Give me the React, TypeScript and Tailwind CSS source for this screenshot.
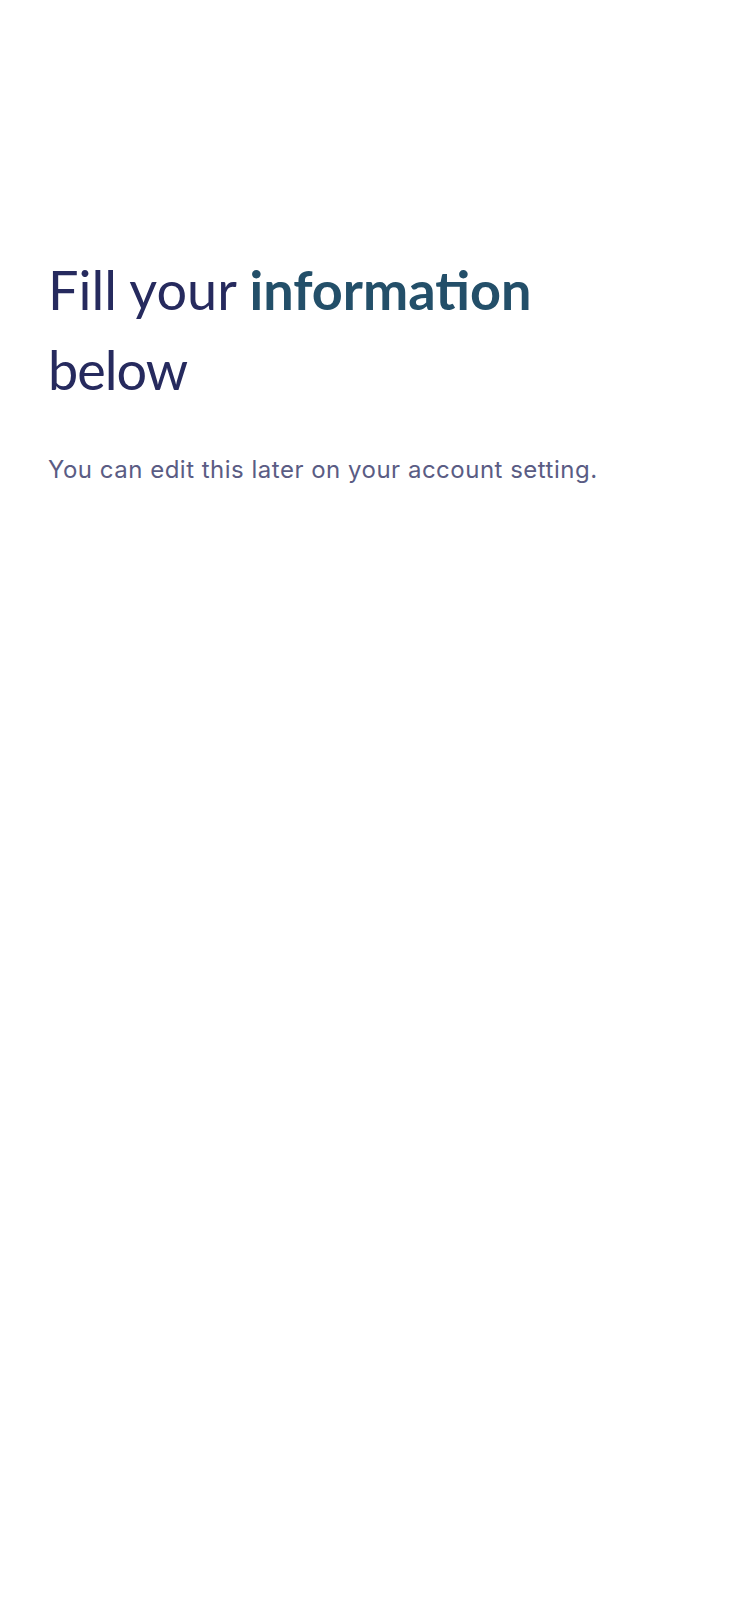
export default function App() {
  return (
    <div className="min-h-[1624px] w-full bg-white">
      <div className="px-12 pt-[250px]">
        <h1 className="font-['Lato',sans-serif] text-[54px] leading-[80px] font-normal text-[#262a5e]">
          Fill your <span className="font-bold text-[#234f69]">information</span>
          <br />
          <span className="tracking-[-1px]">below</span>
        </h1>
        <p className="mt-[44px] font-['Inter',sans-serif] text-[24px] leading-[32px] tracking-[0.5px] text-[#5a5c84]">
          You can edit this later on your account setting.
        </p>
      </div>
    </div>
  );
}
